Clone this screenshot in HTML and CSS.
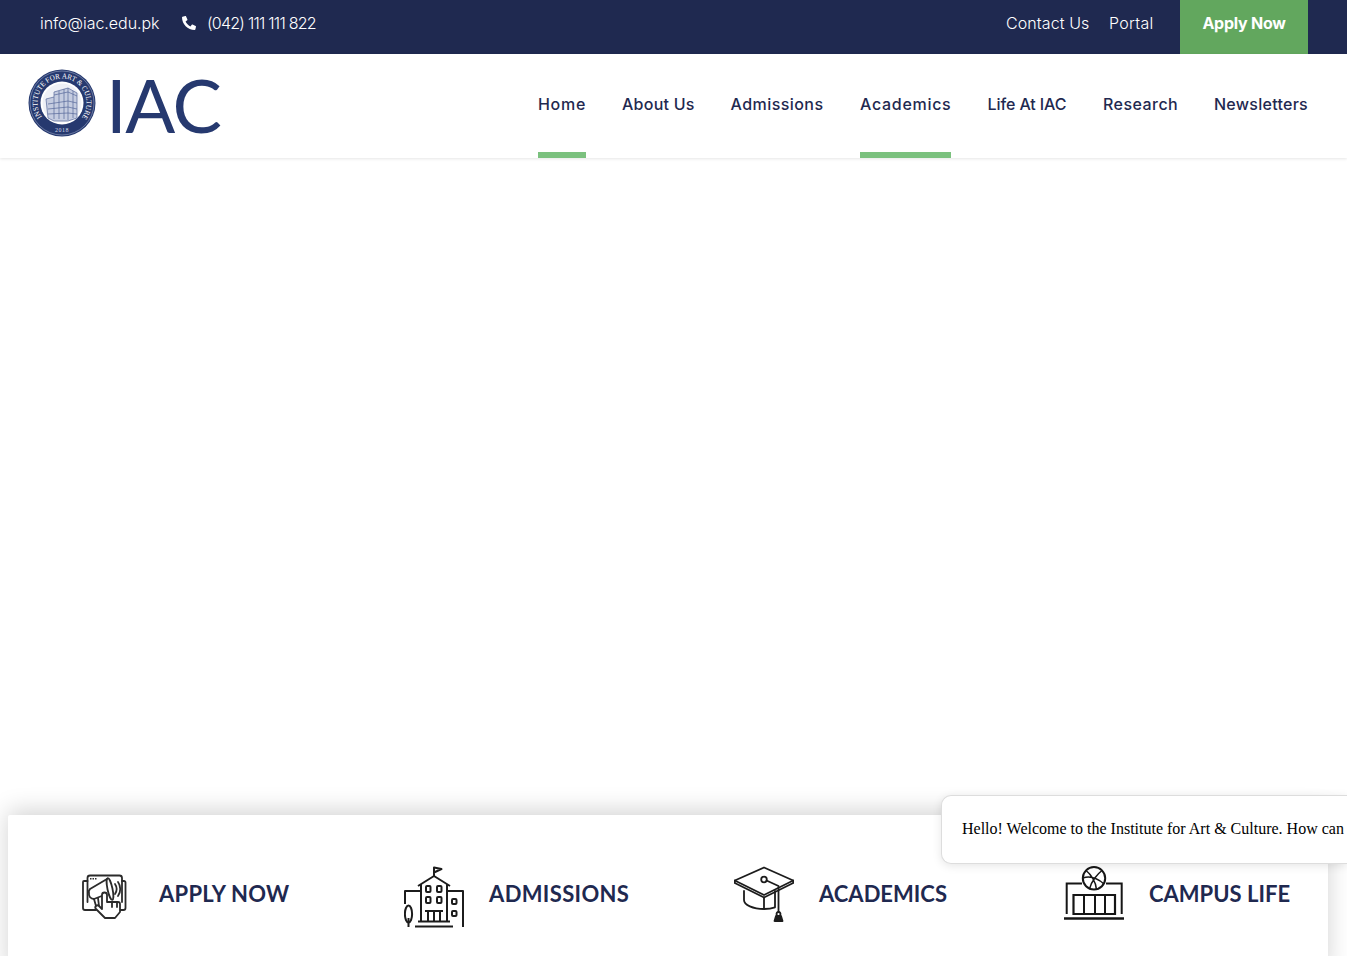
FILE: index.html
```html
<!DOCTYPE html>
<html lang="en">
<head>
<meta charset="utf-8">
<title>Institute for Art &amp; Culture</title>
<link rel="stylesheet" href="styles.css">
</head>
<body>
<div class="topbar">
  <div class="top-left">
    <a class="top-link email">info@iac.edu.pk</a>
    <a class="top-link phone">
      <svg class="phone-icon" viewBox="0 0 512 512"><path transform="matrix(-1 0 0 1 512 0)" fill="#fff" d="M493.4 24.6l-104-24c-11.3-2.6-22.9 3.3-27.5 13.9l-48 112c-4.2 9.8-1.4 21.3 6.9 28l60.6 49.6c-36 76.7-98.9 140.5-177.2 177.2l-49.6-60.6c-6.8-8.3-18.2-11.1-28-6.9l-112 48C3.9 366.5-2 378.1.6 389.4l24 104C27.1 504.2 36.7 512 48 512c256.1 0 464-207.5 464-464 0-11.2-7.7-20.9-18.6-23.4z"/></svg>
      <span class="phone-num">(042) 111 111 822</span>
    </a>
  </div>
  <div class="top-right">
    <a class="top-link contact">Contact Us</a>
    <a class="top-link portal">Portal</a>
    <a class="apply-btn">Apply Now</a>
  </div>
</div>

<header class="header">
  <div class="logo">
    <svg class="seal" viewBox="0 0 68 68">
      <defs>
        <path id="arcTop" d="M13.9 48A24.500 24.500 0 1 1 54.100 48"/>
      </defs>
      <circle cx="34" cy="34" r="33.500" fill="#26396f"/>
      <circle cx="34" cy="34" r="32" fill="none" stroke="#aeb8d2" stroke-width=".5"/>
      <circle cx="34" cy="34" r="21.500" fill="#fff"/>
      <circle cx="34" cy="34" r="19.500" fill="#eef0f6"/>
      <text class="seal-text"><textPath href="#arcTop" startOffset="0" textLength="107" lengthAdjust="spacingAndGlyphs">INSTITUTE FOR ART &amp; CULTURE</textPath></text>
      <text class="seal-year" x="34" y="63" text-anchor="middle">2018</text>
      <g fill="none" stroke="#56679a" stroke-width=".7">
        <path d="M18 30l8-2v-5l14-4 9 5v25l-9 3H26l-6-3z" fill="#c5cce0"/>
        <path d="M26 28v22M31 22v28M36 20v30M40 19v32M45 22v27M20 35l20-3 9 2M20 40l20-2 9 2M20 45l20-1 9 1M26 26l14-3 9 4"/>
      </g>
    </svg>
    <span class="wordmark">IAC</span>
  </div>
  <nav class="nav">
    <a class="nav-item active w-home">Home</a>
    <a class="nav-item w-about">About Us</a>
    <a class="nav-item w-adm">Admissions</a>
    <a class="nav-item active w-aca">Academics</a>
    <a class="nav-item w-life">Life At IAC</a>
    <a class="nav-item w-res">Research</a>
    <a class="nav-item w-news">Newsletters</a>
  </nav>
</header>

<main class="hero"></main>

<section class="quick">
  <a class="quick-item">
    <svg class="quick-icon" viewBox="0 0 60 64">
      <g fill="none" stroke="#2b2b2b" stroke-width="1.800" stroke-linecap="round" stroke-linejoin="round">
        <path d="M13.500 38V14a2.500 2.500 0 0 1 2.500-2.500h29.500a2.500 2.500 0 0 1 2.500 2.500v24"/>
        <path d="M13.500 17H10a1 1 0 0 0-1 1v26a2 2 0 0 0 2 2h11"/>
        <path d="M48 17h2a1.500 1.500 0 0 1 1.500 1.500V44a2 2 0 0 1-2 2H46"/>
        <path d="M16 25l17-10M20 35l9-3.500M16 25a4 4 0 0 0-1 4 5 5 0 0 0 5 6"/>
        <path d="M20 35l2 7h3l-1-8"/>
        <ellipse cx="36" cy="25" rx="2.500" ry="11" transform="rotate(-12 36 25)"/>
        <path d="M41 20c2 3 2 7 0 10M44 18c3 4 3 10 0 14"/>
        <path d="M31 54l-9-9a2 2 0 0 1 3-3l3 3V31a2.500 2.500 0 0 1 5 0v7h11a2 2 0 0 1 2 2v8l-5 6z" fill="#fff"/>
        <path d="M38 38v5M43 38v5"/>
      </g>
      <path fill="#2b2b2b" d="M16 14h1.500v1.500H16zM18.500 14H20v1.500h-1.500zM21 14h1.500v1.500H21z"/>
    </svg>
    <span class="quick-label label-apply">APPLY NOW</span>
  </a>
  <a class="quick-item">
    <svg class="quick-icon" viewBox="0 0 60 64">
      <g fill="none" stroke="#1c1c1c" stroke-width="2" stroke-linejoin="round">
        <path d="M30 12V3.500l7.500 1.500-7.500 3.500"/>
        <path d="M14 22l16-10 16 10"/>
        <path d="M17 20v37M43 20v37"/>
        <path d="M17 27H1v13M43 27h16v36"/>
        <ellipse cx="4.500" cy="50" rx="3.600" ry="8.500"/>
        <path d="M4.500 54v9"/>
        <rect x="22" y="22" width="4.500" height="6" rx="1"/>
        <rect x="33" y="22" width="4.500" height="6" rx="1"/>
        <rect x="22" y="33" width="4.500" height="6" rx="1"/>
        <rect x="33" y="33" width="4.500" height="6" rx="1"/>
        <rect x="48" y="35" width="4.500" height="5" rx="1"/>
        <rect x="48" y="47" width="4.500" height="5" rx="1"/>
        <path d="M21 47h18M24 47v10M30 47v10M36 47v10"/>
        <path d="M14 57.500h32M11 62.500h38"/>
      </g>
    </svg>
    <span class="quick-label label-adm">ADMISSIONS</span>
  </a>
  <a class="quick-item">
    <svg class="quick-icon" viewBox="0 0 60 64">
      <g fill="none" stroke="#1c1c1c" stroke-width="1.800" stroke-linejoin="round" stroke-linecap="round">
        <path d="M30 3.500L.8 16.500 30 31 59.200 16.500z"/>
        <path d="M.8 16.500v2.500L30 33.500l29.200-14.500v-2.500"/>
        <circle cx="30" cy="15.500" r="2.800"/>
        <path d="M32.500 16.500L44.500 22v26"/>
        <path d="M10 27v9c0 5 9 9 20 9 4 0 8-.6 11-1.700V27"/>
        <path d="M30 33.500V44"/>
        <path d="M44.500 48a2 2 0 1 0 .01 0"/>
        <path d="M42 52l-1.500 5h8L47 52z" fill="#1c1c1c"/>
      </g>
    </svg>
    <span class="quick-label">ACADEMICS</span>
  </a>
  <a class="quick-item">
    <svg class="quick-icon" viewBox="0 0 60 64">
      <g fill="none" stroke="#161616" stroke-width="2">
        <circle cx="30" cy="14.300" r="11.200"/>
        <path d="M22 6.500c4.500 3.500 10 11 10.500 19M38 6.500c-4 3-11 11-12.500 18.500M19 14c6-2 14 0 21 6" stroke-width="1.500"/>
        <path d="M2.700 50V19.500H18M42 19.500h15.700V50"/>
        <path d="M9.500 50V31h41.500v19z" stroke-width="2.200"/>
        <path d="M20 31v19M31 31v19M41 31v19"/>
        <path d="M0 54.500h60" stroke-width="2.400"/>
      </g>
    </svg>
    <span class="quick-label">CAMPUS LIFE</span>
  </a>
  <div class="bubble">Hello! Welcome to the Institute for Art &amp; Culture. How can</div>
</section>
</body>
</html>
```

FILE: styles.css
```css
* { box-sizing: border-box; }

html, body {
  margin: 0;
  padding: 0;
  height: 956px;
  overflow: hidden;
  background: #fff;
}

body {
  font-family: Inter, "Noto Sans", sans-serif;
  color: #1f2950;
}

.topbar {
  height: 54px;
  background: #1f2950;
  padding: 0 39px 0 40px;
  display: flex;
  justify-content: space-between;
  align-items: center;
  color: #fff;
}

.top-left, .top-right {
  display: flex;
  align-items: center;
  height: 100%;
}

.top-link {
  font-size: 16px;
  font-weight: 300;
  white-space: nowrap;
  padding-bottom: 9px;
}

.email { width: 142px; letter-spacing: -.05px; }

.phone {
  display: flex;
  align-items: center;
  gap: 11px;
}

.phone-num { letter-spacing: -.75px; }

.phone-icon {
  width: 14px;
  height: 14px;
  display: block;
}

.contact { width: 103px; letter-spacing: .1px; }
.portal { width: 71px; letter-spacing: .3px; }

.apply-btn {
  width: 128px;
  height: 100%;
  padding-bottom: 9px;
  background: #62a75e;
  color: #fff;
  font-size: 16px;
  font-weight: 700;
  display: flex;
  align-items: center;
  justify-content: center;
  letter-spacing: -.25px;
}

.header {
  height: 104px;
  padding: 0 39px 0 28px;
  display: flex;
  justify-content: space-between;
  box-shadow: 0 1px 3px rgba(0, 0, 0, .1);
  position: relative;
}

.logo {
  display: flex;
  align-items: flex-start;
  padding-top: 15px;
  gap: 10px;
}

.seal {
  width: 68px;
  height: 68px;
  display: block;
}

.seal-text {
  font-family: "Liberation Serif", serif;
  font-size: 7.500px;
  fill: #fff;
}

.seal-year {
  font-family: "Liberation Serif", serif;
  font-size: 6px;
  letter-spacing: .5px;
  fill: #d7dcea;
}

.wordmark {
  font-family: Lato, sans-serif;
  font-weight: 400;
  font-size: 74px;
  line-height: 72px;
  letter-spacing: -1.500px;
  color: #26396f;
}

.nav {
  display: flex;
  gap: 36px;
}

.nav-item {
  height: 104px;
  font-size: 16px;
  font-weight: 500;
  line-height: 101px;
  color: #1f2950;
  white-space: nowrap;
  display: block;
  text-align: center;
}

.nav-item.active {
  border-bottom: 6px solid #7bc17e;
}

.w-home { width: 48px; letter-spacing: .7px; }
.w-about { width: 72px; letter-spacing: .25px; }
.w-adm { width: 94px; letter-spacing: .45px; }
.w-aca { width: 91px; letter-spacing: .7px; }
.w-life { width: 80px; letter-spacing: -.1px; }
.w-res { width: 75px; letter-spacing: .45px; }
.w-news { width: 94px; letter-spacing: .27px; }

.hero {
  height: 657px;
}

.quick {
  position: relative;
  width: 1320px;
  height: 160px;
  margin-left: 8px;
  background: #fff;
  border-radius: 2px;
  box-shadow: 0 -4px 25px rgba(0, 0, 0, .18);
  display: grid;
  grid-template-columns: repeat(4, 330px);
  padding-top: 49px;
}

.quick-item {
  display: flex;
  align-items: flex-start;
  gap: 25px;
  padding-left: 66px;
}

.quick-icon {
  width: 60px;
  height: 64px;
  display: block;
  flex: none;
}

.quick-label {
  font-family: Lato, sans-serif;
  font-weight: 700;
  font-size: 22px;
  line-height: 59px;
  color: #1f2950;
  white-space: nowrap;
}

.label-apply { letter-spacing: .25px; }
.label-adm { letter-spacing: .35px; }

.bubble {
  position: absolute;
  left: 933px;
  top: -20px;
  width: 406px;
  height: 69px;
  padding: 0 0 2px 20px;
  display: flex;
  align-items: center;
  background: #fff;
  border: 1px solid #ddd;
  border-right: 0;
  border-radius: 10px 0 0 10px;
  box-shadow: 0 2px 10px rgba(0, 0, 0, .1);
  font-family: "Liberation Serif", serif;
  font-size: 16px;
  color: #000;
  white-space: nowrap;
}
```
